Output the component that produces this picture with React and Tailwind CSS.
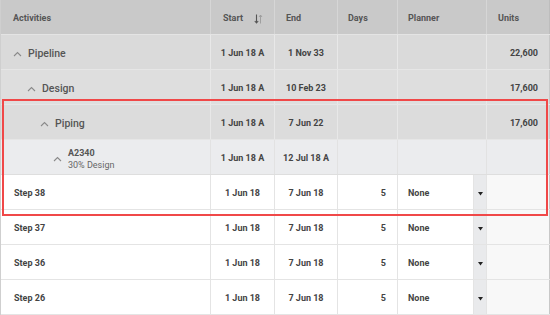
import React from 'react'

const groups = [
  { name: 'Pipeline', indent: 'pl-3', start: '1 Jun 18 A', end: '1 Nov 33', units: '22,600', bg: 'bg-[#dadada]' },
  { name: 'Design', indent: 'pl-[26px]', start: '1 Jun 18 A', end: '10 Feb 23', units: '17,600', bg: 'bg-[#dedede]' },
  { name: 'Piping', indent: 'pl-[39px]', start: '1 Jun 18 A', end: '7 Jun 22', units: '17,600', bg: 'bg-[#dcdcdc]' },
]

const steps = ['Step 38', 'Step 37', 'Step 36', 'Step 26']

function Chevron() {
  return (
    <svg width="9" height="6" viewBox="0 0 9 6" className="mr-[6px] shrink-0">
      <path d="M1 5 L4.5 1.5 L8 5" fill="none" stroke="#8a8a8a" strokeWidth="1.1" />
    </svg>
  )
}

function SortIcon() {
  return (
    <svg width="9" height="10" viewBox="0 0 9 10">
      <path d="M2.5 0.5 V8.8 M0.8 7 L2.5 9 L4.2 7" fill="none" stroke="#555" strokeWidth="1.1" />
      <path d="M6.5 9.5 V1.2 M5 3 L6.5 1 L8 3" fill="none" stroke="#9a9a9a" strokeWidth="0.9" />
    </svg>
  )
}

// cells sit a touch low in the row, like the original
const cell = 'h-full flex items-center border-r pt-[4px]'

export default function App() {
  return (
    <div className="relative w-[550px] h-[315px] overflow-hidden bg-white text-[#444] border-l border-[#cfcfcf]" style={{ fontFamily: 'Roboto, "Liberation Sans", sans-serif' }}>
      {/* header */}
      <div className="flex h-[35px] bg-[#c9c9c9] text-[9px] font-bold text-[#555] border-b border-[#e4e4e4]">
        <div className={`${cell} w-[210px] pl-3 border-[#d6d6d6]`}>Activities</div>
        <div className={`${cell} w-[64px] pl-3 pr-[11px] justify-between border-[#d6d6d6]`}>
          <span>Start</span>
          <SortIcon />
        </div>
        <div className={`${cell} w-[63px] pl-[11px] border-[#d6d6d6]`}>End</div>
        <div className={`${cell} w-[60px] pl-[10px] border-[#d6d6d6]`}>Days</div>
        <div className={`${cell} w-[89px] pl-[10px] border-[#d6d6d6]`}>Planner</div>
        <div className={`${cell} flex-1 pl-[11px] border-[#bdbdbd]`}>Units</div>
      </div>

      {groups.map(g => (
        <div key={g.name} className={`flex h-[35px] ${g.bg} border-b border-[#e6e6e6]`}>
          <div className={`${cell} w-[210px] ${g.indent} border-[#e8e8e8] font-medium text-[#555] text-[10.5px]`}>
            <Chevron />
            {g.name}
          </div>
          <div className={`${cell} w-[64px] justify-center border-[#e8e8e8] text-[9px] font-bold`}>{g.start}</div>
          <div className={`${cell} w-[63px] justify-center border-[#e8e8e8] text-[9px] font-bold`}>{g.end}</div>
          <div className={`${cell} w-[60px] border-[#e8e8e8]`}></div>
          <div className={`${cell} w-[89px] border-[#e8e8e8]`}></div>
          <div className={`${cell} flex-1 justify-end pr-[11px] border-[#c8c8c8] text-[9px] font-bold`}>{g.units}</div>
        </div>
      ))}

      <div className="flex h-[35px] bg-[#ebecee] border-b border-[#dedede]">
        <div className={`${cell} w-[210px] pl-[52px] border-[#e2e2e2]`}>
          <Chevron />
          <div className="leading-[12px] text-[9px]">
            <div className="font-bold text-[#555]">A2340</div>
            <div className="text-[#666]">30% Design</div>
          </div>
        </div>
        <div className={`${cell} w-[64px] justify-center border-[#e2e2e2] text-[9px] font-bold`}>1 Jun 18 A</div>
        <div className={`${cell} w-[63px] justify-center border-[#e2e2e2] text-[9px] font-bold`}>12 Jul 18 A</div>
        <div className={`${cell} w-[60px] border-[#e2e2e2]`}></div>
        <div className={`${cell} w-[89px] border-[#e2e2e2]`}></div>
        <div className={`${cell} flex-1 border-[#c8c8c8]`}></div>
      </div>

      {steps.map(s => (
        <div key={s} className="flex h-[35px] bg-white border-b border-[#e4e4e4] text-[9px] font-bold">
          <div className={`${cell} w-[210px] pl-[13px] border-[#e4e4e4]`}>{s}</div>
          <div className={`${cell} w-[64px] justify-center border-[#e4e4e4]`}>1 Jun 18</div>
          <div className={`${cell} w-[63px] justify-center border-[#e4e4e4]`}>7 Jun 18</div>
          <div className={`${cell} w-[60px] justify-end pr-[11px] border-[#e4e4e4]`}>5</div>
          <div className={`${cell} w-[76px] pl-[10px] border-[#e4e4e4]`}>None</div>
          <div className={`${cell} w-[13px] justify-center bg-[#e9eaec] border-[#e4e4e4]`}>
            <svg width="5" height="4" viewBox="0 0 5 4"><path d="M0 0 H5 L2.5 3.5 Z" fill="#222" /></svg>
          </div>
          <div className={`${cell} flex-1 bg-[#f8f8f8] border-[#c8c8c8]`}></div>
        </div>
      ))}

      {/* highlight box */}
      <div className="absolute left-[1px] top-[99px] w-[546px] h-[117px] border-2 border-[#f04848] pointer-events-none" />
    </div>
  )
}
